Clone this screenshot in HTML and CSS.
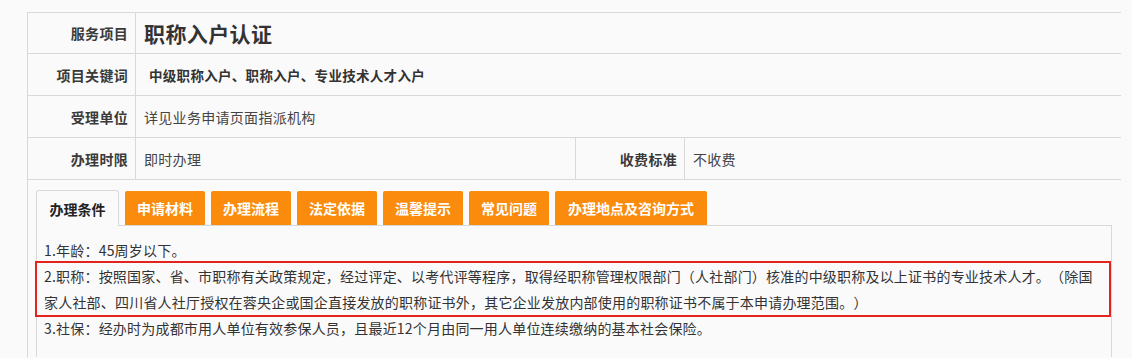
FILE: index.html
```html
<!DOCTYPE html>
<html lang="zh-CN">
<head>
<meta charset="utf-8">
<title>职称入户认证</title>
<link rel="stylesheet" href="styles.css">
</head>
<body>
<div class="page">
  <div class="info">
    <div class="label">服务项目</div>
    <div class="value span3 title">职称入户认证</div>

    <div class="label">项目关键词</div>
    <div class="value span3 keywords">中级职称入户、职称入户、专业技术人才入户</div>

    <div class="label">受理单位</div>
    <div class="value span3">详见业务申请页面指派机构</div>

    <div class="label">办理时限</div>
    <div class="value">即时办理</div>
    <div class="label">收费标准</div>
    <div class="value last">不收费</div>
  </div>

  <div class="tabs-area">
    <div class="tabs">
      <div class="tab active">办理条件</div>
      <div class="tab">申请材料</div>
      <div class="tab">办理流程</div>
      <div class="tab">法定依据</div>
      <div class="tab">温馨提示</div>
      <div class="tab">常见问题</div>
      <div class="tab">办理地点及咨询方式</div>
    </div>
    <div class="panel">
      <p class="line">1.年龄：45周岁以下。</p>
      <p class="line highlight">2.职称：按照国家、省、市职称有关政策规定，经过评定、以考代评等程序，取得经职称管理权限部门（人社部门）核准的中级职称及以上证书的专业技术人才。（除国家人社部、四川省人社厅授权在蓉央企或国企直接发放的职称证书外，其它企业发放内部使用的职称证书不属于本申请办理范围。）</p>
      <p class="line">3.社保：经办时为成都市用人单位有效参保人员，且最近12个月由同一用人单位连续缴纳的基本社会保险。</p>
    </div>
  </div>
</div>
</body>
</html>
```

FILE: styles.css
```css
* {
  box-sizing: border-box;
}

html, body {
  margin: 0;
  padding: 0;
  background: #fbfafb;
}

body {
  font-family: "Noto Sans CJK SC", "Microsoft YaHei", sans-serif;
  color: #333;
  font-size: 14px;
  height: 358px;
  overflow: hidden;
}

.page {
  margin: 12px 0 0 27px;
  width: 1094px;
  border-left: 1px solid #d9d9d9;
  height: 346px;
}

.info {
  display: grid;
  grid-template-columns: 108px 440px 109px 1fr;
  grid-template-rows: 41px 42px 42px 42px;
  border-top: 1px solid #d9d9d9;
}

.label {
  display: flex;
  align-items: center;
  justify-content: flex-end;
  padding-right: 7px;
  font-weight: 700;
  color: #3a3a3a;
  font-size: 14px;
  border-right: 1px solid #d9d9d9;
  border-bottom: 1px solid #d9d9d9;
  letter-spacing: 0.3px;
}

.value {
  display: flex;
  align-items: center;
  padding-left: 8px;
  color: #444;
  border-right: 1px solid #d9d9d9;
  border-bottom: 1px solid #d9d9d9;
  letter-spacing: 0.3px;
}

.value.span3 {
  grid-column: span 3;
  border-right: none;
}

.value.last {
  border-right: none;
}

.title {
  font-size: 21px;
  font-weight: 700;
  color: #333;
  letter-spacing: 0.4px;
}

.keywords {
  padding-left: 13px;
  font-weight: 700;
  color: #333;
  font-size: 13.5px;
}

.tabs-area {
  margin-top: 10px;
  padding: 0 9px 0 8px;
}

.tabs {
  display: flex;
  align-items: flex-end;
  gap: 6px;
  position: relative;
  z-index: 1;
}

.tab {
  height: 34px;
  padding: 0 12px;
  background: #fb8b0c;
  color: #fff;
  font-weight: 700;
  font-size: 14px;
  display: flex;
  align-items: center;
  justify-content: center;
  border-radius: 2px 2px 0 0;
}

.tab.active {
  width: 83px;
  height: 36px;
  margin-bottom: -1px;
  background: #fbfafb;
  color: #222;
  border: 1px solid #d9d9d9;
  border-bottom: none;
  border-radius: 3px 3px 0 0;
}

.tab:last-child {
  padding: 0 13px;
}

.panel {
  border: 1px solid #d9d9d9;
  border-bottom: none;
  padding: 11px 7px 0 7px;
  height: 132px;
}

.line {
  margin: 0;
  line-height: 26px;
  font-size: 14px;
  letter-spacing: 0.2px;
  text-spacing-trim: space-all;
  color: #333;
}

.highlight {
  border: 2px solid #e3231d;
  margin: -2px -7px -2px -9px;
  padding: 0 5px 0 7px;
}
```
